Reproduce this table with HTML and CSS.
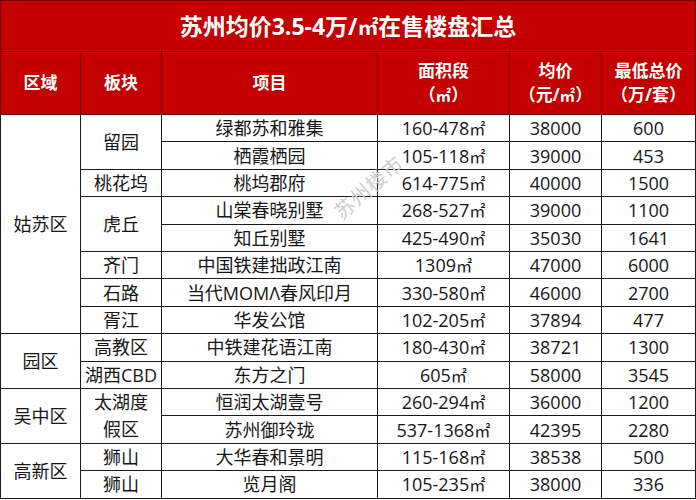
FILE: index.html
```html
<!DOCTYPE html>
<html lang="zh">
<head>
<meta charset="utf-8">
<title>苏州均价3.5-4万/㎡在售楼盘汇总</title>
<link rel="stylesheet" href="styles.css">
</head>
<body>
<div class="wrap">
<table class="sheet">
  <colgroup>
    <col class="c1"><col class="c2"><col class="c3"><col class="c4"><col class="c5"><col class="c6">
  </colgroup>
  <thead>
    <tr class="title-row"><th colspan="6">苏州均价3.5-4万/<span class="u">㎡</span>在售楼盘汇总</th></tr>
    <tr class="head-row">
      <th>区域</th><th>板块</th><th>项目</th>
      <th>面积段<br>（<span class="u">㎡</span>）</th>
      <th>均价<br>（元/<span class="u">㎡</span>）</th>
      <th>最低总价<br>（万/套）</th>
    </tr>
  </thead>
  <tbody>
    <tr><td rowspan="8">姑苏区</td><td rowspan="2">留园</td><td>绿都苏和雅集</td><td>160-478<span class="u">㎡</span></td><td>38000</td><td>600</td></tr>
    <tr><td>栖霞栖园</td><td>105-118<span class="u">㎡</span></td><td>39000</td><td>453</td></tr>
    <tr><td>桃花坞</td><td>桃坞郡府</td><td>614-775<span class="u">㎡</span></td><td>40000</td><td>1500</td></tr>
    <tr><td rowspan="2">虎丘</td><td>山棠春晓别墅</td><td>268-527<span class="u">㎡</span></td><td>39000</td><td>1100</td></tr>
    <tr><td>知丘别墅</td><td>425-490<span class="u">㎡</span></td><td>35030</td><td>1641</td></tr>
    <tr><td>齐门</td><td>中国铁建拙政江南</td><td>1309<span class="u">㎡</span></td><td>47000</td><td>6000</td></tr>
    <tr><td>石路</td><td>当代MOMΛ春风印月</td><td>330-580<span class="u">㎡</span></td><td>46000</td><td>2700</td></tr>
    <tr><td>胥江</td><td>华发公馆</td><td>102-205<span class="u">㎡</span></td><td>37894</td><td>477</td></tr>
    <tr><td rowspan="2">园区</td><td>高教区</td><td>中铁建花语江南</td><td>180-430<span class="u">㎡</span></td><td>38721</td><td>1300</td></tr>
    <tr><td>湖西CBD</td><td>东方之门</td><td>605<span class="u">㎡</span></td><td>58000</td><td>3545</td></tr>
    <tr><td rowspan="2">吴中区</td><td rowspan="2" class="wrapcell">太湖度<br>假区</td><td>恒润太湖壹号</td><td>260-294<span class="u">㎡</span></td><td>36000</td><td>1200</td></tr>
    <tr><td>苏州御玲珑</td><td>537-1368<span class="u">㎡</span></td><td>42395</td><td>2280</td></tr>
    <tr><td rowspan="2">高新区</td><td>狮山</td><td>大华春和景明</td><td>115-168<span class="u">㎡</span></td><td>38538</td><td>500</td></tr>
    <tr><td>狮山</td><td>览月阁</td><td>105-235<span class="u">㎡</span></td><td>38000</td><td>336</td></tr>
  </tbody>
</table>
<div class="watermark">苏州楼市</div>
</div>
</body>
</html>
```
FILE: styles.css
```css
html, body {
  margin: 0;
  padding: 0;
  background: #ffffff;
}
body {
  font-family: "Open Sans", "Noto Sans CJK SC", sans-serif;
  color: #161616;
}
.wrap {
  position: relative;
  width: 696px;
  height: 500px;
  overflow: hidden;
}
.sheet {
  border-collapse: collapse;
  table-layout: fixed;
  width: 695px;
  margin: 0;
}
.c1 { width: 80px; }
.c2 { width: 81px; }
.c3 { width: 216px; }
.c4 { width: 132px; }
.c5 { width: 92px; }
.c6 { width: 94px; }

.title-row th {
  height: 50px;
  padding: 0;
  background: #c50000;
  color: #ffffff;
  font-size: 23px;
  line-height: 24px;
  font-weight: 700;
  text-align: center;
  border: 1px solid #6e0000;
}
.head-row th {
  height: 62px;
  padding: 0;
  background: #c50000;
  color: #ffffff;
  font-size: 17px;
  font-weight: 700;
  line-height: 24px;
  text-align: center;
  border: 1px solid #6e0000;
}
.sheet td {
  height: 26.4px;
  padding: 0;
  font-size: 18px;
  line-height: 20px;
  text-align: center;
  vertical-align: middle;
  border: 1px solid #1a1a1a;
  white-space: nowrap;
}
.sheet td.wrapcell {
  line-height: 27px;
}
.u {
  font-family: "Noto Sans CJK SC", sans-serif;
  font-size: 0.9em;
  line-height: 1;
}
.watermark {
  position: absolute;
  left: 326px;
  top: 172px;
  font-family: "Noto Sans CJK SC", sans-serif;
  font-size: 20px;
  color: #cdcdcd;
  transform: rotate(-41deg);
  letter-spacing: 1px;
  pointer-events: none;
}
```
